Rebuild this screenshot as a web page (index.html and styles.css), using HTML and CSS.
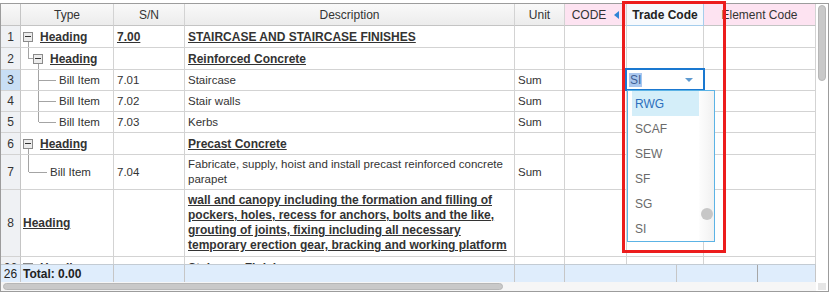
FILE: index.html
```html
<!DOCTYPE html>
<html>
<head>
<meta charset="utf-8">
<link rel="stylesheet" href="styles.css">
</head>
<body>
<div class="stage">
  <div class="grid">
    <div class="left">
      <div class="viewport">
        <div class="row head">
          <div class="cell rn"></div>
          <div class="cell">Type</div>
          <div class="cell">S/N</div>
          <div class="cell">Description</div>
          <div class="cell">Unit</div>
          <div class="cell pink">CODE <span class="sort"></span></div>
          <div class="cell trade">Trade Code</div>
          <div class="cell pink">Element Code</div>
        </div>

        <div class="row">
          <div class="cell rn">1</div>
          <div class="cell type"><svg class="tree" width="17"><line x1="5.5" y1="50%" x2="5.5" y2="100%"/><svg y="50%" overflow="visible"><rect x="0.5" y="-4" width="9" height="9"/><line class="mn" x1="2" y1="0" x2="8" y2="0"/></svg></svg><span class="lnk">Heading</span></div>
          <div class="cell"><span class="lnk">7.00</span></div>
          <div class="cell"><span class="lnk">STAIRCASE AND STAIRCASE FINISHES</span></div>
          <div class="cell"></div>
          <div class="cell"></div>
          <div class="cell"></div>
          <div class="cell"></div>
        </div>

        <div class="row">
          <div class="cell rn">2</div>
          <div class="cell type"><svg class="tree" width="27"><line x1="5.5" y1="0" x2="5.5" y2="50%"/><line x1="5.5" y1="50%" x2="10" y2="50%"/><line x1="15.5" y1="50%" x2="15.5" y2="100%"/><svg y="50%" overflow="visible"><rect x="10.5" y="-4" width="9" height="9"/><line class="mn" x1="12" y1="0" x2="18" y2="0"/></svg></svg><span class="lnk">Heading</span></div>
          <div class="cell"></div>
          <div class="cell"><span class="lnk">Reinforced Concrete</span></div>
          <div class="cell"></div>
          <div class="cell"></div>
          <div class="cell"></div>
          <div class="cell"></div>
        </div>

        <div class="row item">
          <div class="cell rn sel">3</div>
          <div class="cell type"><svg class="tree" width="36"><line x1="15.5" y1="0" x2="15.5" y2="100%"/><line x1="15.5" y1="50%" x2="33" y2="50%"/></svg>Bill Item</div>
          <div class="cell">7.01</div>
          <div class="cell">Staircase</div>
          <div class="cell">Sum</div>
          <div class="cell"></div>
          <div class="cell editing">
            <div class="editor"><span class="selected">SI</span><span class="caret"></span></div>
            <div class="dropdown">
              <div class="options">
                <div class="opt active">RWG</div>
                <div class="opt">SCAF</div>
                <div class="opt">SEW</div>
                <div class="opt">SF</div>
                <div class="opt">SG</div>
                <div class="opt">SI</div>
              </div>
              <div class="dd-track"><div class="dd-thumb"></div></div>
            </div>
          </div>
          <div class="cell"></div>
        </div>

        <div class="row item">
          <div class="cell rn">4</div>
          <div class="cell type"><svg class="tree" width="36"><line x1="15.5" y1="0" x2="15.5" y2="100%"/><line x1="15.5" y1="50%" x2="33" y2="50%"/></svg>Bill Item</div>
          <div class="cell">7.02</div>
          <div class="cell">Stair walls</div>
          <div class="cell">Sum</div>
          <div class="cell"></div>
          <div class="cell"></div>
          <div class="cell"></div>
        </div>

        <div class="row item">
          <div class="cell rn">5</div>
          <div class="cell type"><svg class="tree" width="36"><line x1="15.5" y1="0" x2="15.5" y2="50%"/><line x1="15.5" y1="50%" x2="33" y2="50%"/></svg>Bill Item</div>
          <div class="cell">7.03</div>
          <div class="cell">Kerbs</div>
          <div class="cell">Sum</div>
          <div class="cell"></div>
          <div class="cell"></div>
          <div class="cell"></div>
        </div>

        <div class="row">
          <div class="cell rn">6</div>
          <div class="cell type"><svg class="tree" width="17"><line x1="5.5" y1="50%" x2="5.5" y2="100%"/><svg y="50%" overflow="visible"><rect x="0.5" y="-4" width="9" height="9"/><line class="mn" x1="2" y1="0" x2="8" y2="0"/></svg></svg><span class="lnk">Heading</span></div>
          <div class="cell"></div>
          <div class="cell"><span class="lnk">Precast Concrete</span></div>
          <div class="cell"></div>
          <div class="cell"></div>
          <div class="cell"></div>
          <div class="cell"></div>
        </div>

        <div class="row two">
          <div class="cell rn">7</div>
          <div class="cell type"><svg class="tree" width="27"><line x1="5.5" y1="0" x2="5.5" y2="50%"/><line x1="5.5" y1="50%" x2="24" y2="50%"/></svg>Bill Item</div>
          <div class="cell">7.04</div>
          <div class="cell multi">Fabricate, supply, hoist and install precast reinforced concrete<br>parapet</div>
          <div class="cell">Sum</div>
          <div class="cell"></div>
          <div class="cell"></div>
          <div class="cell"></div>
        </div>

        <div class="row four">
          <div class="cell rn">8</div>
          <div class="cell type"><span class="lnk">Heading</span></div>
          <div class="cell"></div>
          <div class="cell multi"><span class="lnk">wall and canopy including the formation and filling of<br>pockers, holes, recess for anchors, bolts and the like,<br>grouting of joints, fixing including all necessary<br>temporary erection gear, bracking and working platform</span></div>
          <div class="cell"></div>
          <div class="cell"></div>
          <div class="cell"></div>
          <div class="cell"></div>
        </div>

        <div class="row">
          <div class="cell rn">26</div>
          <div class="cell type"><svg class="tree" width="17"><line x1="5.5" y1="50%" x2="5.5" y2="100%"/><svg y="50%" overflow="visible"><rect x="0.5" y="-4" width="9" height="9"/><line class="mn" x1="2" y1="0" x2="8" y2="0"/></svg></svg><span class="lnk">Heading</span></div>
          <div class="cell"></div>
          <div class="cell"><span class="lnk">Staircase Finishes</span></div>
          <div class="cell"></div>
          <div class="cell"></div>
          <div class="cell"></div>
          <div class="cell"></div>
        </div>
      </div>

      <div class="totals">
        <div class="tcell rn">26</div>
        <div class="tcell total">Total: 0.00</div>
        <div class="tcell"></div>
        <div class="tcell"></div>
        <div class="tcell"></div>
        <div class="tcell"></div>
        <div class="tcell dark"></div>
        <div class="tcell"></div>
      </div>

      <div class="hbar"><div class="hthumb"></div></div>
    </div>

    <div class="vbar">
      <div class="vthumb"></div>
      <div class="corner"></div>
    </div>
  </div>
  <div class="redbox"></div>
</div>
</body>
</html>
```

FILE: styles.css
```css
* { box-sizing: border-box; }

body {
  margin: 0;
  background: #fff;
  color: #333;
  font-family: "Liberation Sans", Arial, sans-serif;
}

.stage {
  position: relative;
  width: 829px;
  height: 296px;
  padding-top: 3px;
}

.grid {
  display: flex;
  width: 829px;
  height: 289px;
  border: 1px solid #9c9c9c;
}

.left {
  width: 815px;
  display: flex;
  flex-direction: column;
}

.viewport {
  height: 260px;
  overflow: hidden;
}

.row {
  display: grid;
  grid-template-columns: 20px 93px 71px 330px 50px 62px 77px 112px;
  height: 22px;
}
.row.item { height: 21px; }
.row.two { height: 35px; }
.row.four { height: 67px; }

.cell {
  display: flex;
  align-items: center;
  min-width: 0;
  padding: 0 3px;
  border-right: 1px solid #d3d3d3;
  border-bottom: 1px solid #d3d3d3;
  font-size: 11.5px;
  white-space: nowrap;
  overflow: hidden;
}

.cell.type { padding-left: 2px; }

.cell.multi { line-height: 15px; }

.rn {
  justify-content: center;
  padding: 0;
  background: #eff1f4;
  border-right-color: #c5c5c5;
  font-size: 12px;
}
.rn.sel { background: #c8def5; }

.head .cell {
  justify-content: center;
  background: linear-gradient(#f9f9f9, #ececec);
  border-bottom-color: #c4c4c4;
  font-size: 12px;
}
.head .cell.pink { background: #fde3f1; }
.head .cell.trade {
  background: #f6f9fd;
  border-right-color: #a5cdec;
  border-bottom-color: #a5cdec;
  font-weight: bold;
  font-size: 12px;
  color: #222;
}

.sort {
  width: 0;
  height: 0;
  margin-left: 8px;
  border-top: 4px solid transparent;
  border-bottom: 4px solid transparent;
  border-right: 5px solid #2f86d6;
}

.lnk {
  font-weight: bold;
  font-size: 12px;
  text-decoration: underline;
  color: #333;
}

.tree {
  flex: none;
  height: 100%;
  overflow: visible;
}
.tree line {
  stroke: #a4a4a4;
  stroke-width: 1;
  shape-rendering: crispEdges;
}
.tree rect {
  fill: #ececec;
  stroke: #8a8a8a;
  stroke-width: 1;
  shape-rendering: crispEdges;
}
.tree line.mn { stroke: #333; }

/* in-cell editor */
.cell.editing {
  position: relative;
  overflow: visible;
}
.editor {
  position: absolute;
  left: -2px;
  top: -2px;
  width: 80px;
  height: 23px;
  display: flex;
  align-items: center;
  padding-left: 2px;
  border: 2px solid #1a78d0;
  background: #fff;
  z-index: 4;
}
.selected {
  padding: 0 1px;
  line-height: 14px;
  background: #aac6ee;
  color: #3d5f95;
  font-size: 12px;
}
.caret {
  margin-left: auto;
  margin-right: 10px;
  width: 0;
  height: 0;
  border-left: 4px solid transparent;
  border-right: 4px solid transparent;
  border-top: 4px solid #5e9ad0;
}

.dropdown {
  position: absolute;
  left: 0;
  top: 20px;
  width: 88px;
  height: 152px;
  display: flex;
  border: 1px solid #5cb3e5;
  background: #fff;
  z-index: 5;
}
.options {
  width: 71px;
  padding: 0 0 0 4px;
}
.opt {
  height: 25px;
  display: flex;
  align-items: center;
  padding-left: 3px;
  font-size: 12px;
  color: #6a6a6a;
}
.opt.active {
  background: #d4eef9;
  color: #2c6fbd;
}
.dd-track {
  flex: 1;
  background: linear-gradient(to right, #fdfdfd, #f1f1f1);
  padding-top: 117px;
  display: flex;
  justify-content: center;
}
.dd-thumb {
  width: 12px;
  height: 12px;
  border-radius: 50%;
  background: #c7c7c7;
}

/* totals footer */
.totals {
  display: grid;
  grid-template-columns: 20px 93px 71px 330px 50px 112px 81px 58px;
  height: 18px;
  border-top: 1px solid #c3cbd3;
  background: #dfedfc;
}
.tcell {
  display: flex;
  align-items: center;
  padding: 0 2px;
  border-right: 1px solid #c6c6c6;
  font-size: 12px;
}
.tcell.rn {
  background: transparent;
  padding: 0;
  font-size: 12px;
  color: #222;
}
.tcell.total { font-weight: bold; color: #222; }
.tcell.dark { border-right-color: #a6a6a6; }

.hbar {
  height: 9px;
  padding: 1px 0 0 2px;
  background: #f6f6f6;
}
.hthumb {
  width: 500px;
  height: 7px;
  border-radius: 4px;
  background: #c9c9c9;
  border: 1px solid #b7b7b7;
}

.vbar {
  width: 12px;
  display: flex;
  flex-direction: column;
  padding: 1px 0 1px 2px;
}
.vthumb {
  width: 8px;
  height: 76px;
  border-radius: 4px;
  background: #c9c9c9;
  border: 1px solid #b7b7b7;
}
.corner {
  margin-top: auto;
  width: 8px;
  height: 7px;
  background: #e6e6e6;
}

.redbox {
  position: absolute;
  left: 622px;
  top: 1px;
  width: 104px;
  height: 252px;
  border: 3px solid #ec1c1c;
  pointer-events: none;
  z-index: 10;
}
```
